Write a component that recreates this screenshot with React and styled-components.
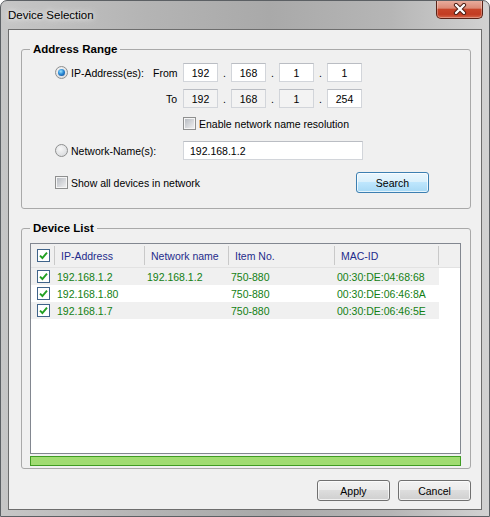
import styled, { createGlobalStyle } from "styled-components";

const UI = `"Liberation Sans", Arial, sans-serif`;

const GlobalStyle = createGlobalStyle`
  html, body { margin: 0; padding: 0; background: #ffffff; }
  body { font-family: ${UI}; font-size: 10.5px; color: #000; }
  * { box-sizing: border-box; }
`;

const Window = styled.div`
  width: 490px;
  height: 517px;
  display: flex;
  flex-direction: column;
  border: 1px solid #5c6064;
  border-radius: 7px 7px 0 0;
  overflow: hidden;
  background: linear-gradient(90deg, #c6c6c6 0%, #b4b4b4 30%, #a9a9a9 55%, #b6b6b6 80%, #d2d2d2 100%);
`;

const TitleBar = styled.div`
  height: 28px;
  flex: none;
  display: flex;
  justify-content: space-between;
  align-items: flex-start;
  padding: 0 6px 0 7px;
`;

const Title = styled.span`
  margin-top: 7px;
  font-family: ${UI};
  font-size: 11.5px;
  line-height: 14px;
  color: #000;
  text-shadow: 0 0 8px #fff, 0 0 4px rgba(255, 255, 255, 0.7);
`;

const CloseButton = styled.div`
  width: 47px;
  height: 19px;
  margin-top: -1px;
  display: flex;
  align-items: center;
  justify-content: center;
  border: 1px solid #5a2216;
  border-top: none;
  border-radius: 0 0 5px 5px;
  background: linear-gradient(#eab0a1 0%, #dc8a76 45%, #c74429 52%, #c23c22 80%, #d5674a 100%);
  box-shadow: inset 0 0 0 1px rgba(255, 255, 255, 0.3);
`;

const Client = styled.div`
  flex: 1;
  margin: 0 7px 6px 7px;
  border: 1px solid #6d6d6d;
  background: #f0f0f0;
  display: flex;
  flex-direction: column;
  padding: 0 10px 0 12px;
`;

const Group = styled.fieldset`
  margin: 13px 0 0 0;
  padding: 0;
  min-inline-size: 0;
  border: 1px solid #a9a9a9;
  border-radius: 3px;
`;

const Legend = styled.legend`
  margin-left: 8px;
  padding: 0 3px;
  font-family: ${UI};
  font-size: 11.5px;
  font-weight: bold;
  line-height: 13px;
  color: #000;
`;

const AddressBody = styled.div`
  padding: 7px 41px 15px 33px;
  display: flex;
  flex-direction: column;
`;

const FormRow = styled.div`
  display: grid;
  grid-template-columns: 98px 30px 1fr;
  align-items: center;
  height: ${(p) => p.$h}px;
  margin-top: ${(p) => p.$top || 0}px;
`;

const BottomRow = styled.div`
  display: flex;
  justify-content: space-between;
  align-items: center;
  height: 21px;
  margin-top: 12px;
`;

const Choice = styled.label`
  display: flex;
  align-items: center;
  gap: 3px;
  grid-column: ${(p) => p.$col || "auto"};
  white-space: nowrap;
`;

const RangeLabel = styled.span`
  text-align: right;
  padding-right: 6px;
`;

const Radio = styled.span`
  width: 13px;
  height: 13px;
  border-radius: 50%;
  border: 1px solid #8e8f8f;
  background: radial-gradient(circle at 40% 35%, #f7f7f7 0%, #d3d5d8 100%);
  display: inline-flex;
  align-items: center;
  justify-content: center;
  flex: none;

  &::after {
    content: "";
    display: ${(p) => (p.$on ? "block" : "none")};
    width: 7px;
    height: 7px;
    border-radius: 50%;
    background: radial-gradient(circle at 40% 35%, #9ae4ff 0%, #2b8ad6 45%, #0b3e84 100%);
  }
`;

const Box = styled.span`
  width: 13px;
  height: 13px;
  flex: none;
  display: inline-flex;
  align-items: center;
  justify-content: center;
  border: 1px solid ${(p) => (p.$checked ? "#40648a" : "#8e8f8f")};
  padding: 1px;
  background: ${(p) =>
    p.$checked ? "#ffffff" : "linear-gradient(135deg, #b8bcc2, #eeeeef) content-box, #f5f5f5"};
`;

const Check = ({ checked }) => (
  <Box $checked={checked}>
    {checked && (
      <svg width="9" height="9" viewBox="0 0 9 9">
        <path d="M1 4.6 L3.4 7 L8 1.6" fill="none" stroke="#22a022" strokeWidth="1.9" />
      </svg>
    )}
  </Box>
);

const IpFields = styled.div`
  display: flex;
  align-items: center;
`;

const IpBox = styled.input`
  width: 35px;
  height: 19px;
  margin: 0;
  padding: 0;
  border: 1px solid #d2d5da;
  border-top-color: #babdc3;
  background: ${(p) => (p.$dim ? "#f3f3f3" : "#ffffff")};
  font-family: ${UI};
  font-size: 10.5px;
  color: #000;
  text-align: center;
  outline: none;
`;

const Dot = styled.span`
  width: 13px;
  text-align: center;
`;

const NameBox = styled(IpBox)`
  width: 180px;
  text-align: left;
  padding-left: 6px;
  grid-column: 3;
`;

const Button = styled.button`
  width: 73px;
  height: 21px;
  margin: 0;
  padding: 0;
  border-radius: 3px;
  font-family: ${UI};
  font-size: 10.5px;
  color: #000;
  border: 1px solid ${(p) => (p.$focus ? "#3c7fb1" : "#707070")};
  background: ${(p) =>
    p.$focus
      ? "linear-gradient(#eaf6fd 0%, #d9f0fc 49%, #bee6fd 50%, #a7d9f5 100%)"
      : "linear-gradient(#f2f2f2 0%, #ebebeb 49%, #dddddd 50%, #cfcfcf 100%)"};
  box-shadow: inset 0 0 0 1px rgba(255, 255, 255, 0.7);
`;

const ListBody = styled.div`
  padding: 8px 9px 2px 8px;
  display: flex;
  flex-direction: column;
`;

const ListView = styled.div`
  height: 211px;
  border: 1px solid #828790;
  background: #ffffff;
`;

const cols = "24px 90px 84px 106px 104px";

const Header = styled.div`
  display: grid;
  grid-template-columns: ${cols} 1fr;
  height: 24px;
  padding: 2px 0;
  background: #f0f0f0;
  border-bottom: 1px solid #e2e2e2;
`;

const HeadCell = styled.div`
  display: flex;
  align-items: center;
  padding-left: 6px;
  color: #1f2c8c;
  border-right: ${(p) => (p.$last ? "none" : "1px solid #c9c9c9")};
`;

const Row = styled.div`
  display: grid;
  grid-template-columns: ${cols};
  width: max-content;
  height: 17px;
  align-items: center;
  background: ${(p) => (p.$odd ? "#f0f0f0" : "#ffffff")};
  color: #138013;
`;

const Cell = styled.div`
  padding-left: ${(p) => (p.$check ? 6 : 2)}px;
  display: flex;
  align-items: center;
  white-space: nowrap;
`;

const Progress = styled.div`
  height: 10px;
  margin-top: 2px;
  border: 1px solid #3f9c22;
  background: #a0dc72;
`;

const Actions = styled.div`
  display: flex;
  justify-content: flex-end;
  gap: 8px;
  margin-top: 11px;
`;

const devices = [
  { ip: "192.168.1.2", name: "192.168.1.2", item: "750-880", mac: "00:30:DE:04:68:68" },
  { ip: "192.168.1.80", name: "", item: "750-880", mac: "00:30:DE:06:46:8A" },
  { ip: "192.168.1.7", name: "", item: "750-880", mac: "00:30:DE:06:46:5E" },
];

export default function App() {
  return (
    <>
      <GlobalStyle />
      <Window>
        <TitleBar>
          <Title>Device Selection</Title>
          <CloseButton>
            <svg width="14" height="12" viewBox="0 0 14 12">
              <path d="M3 2 L11 10 M11 2 L3 10" stroke="#4a1a10" strokeWidth="4.2" strokeLinecap="round" />
              <path d="M3 2 L11 10 M11 2 L3 10" stroke="#ffffff" strokeWidth="2.4" strokeLinecap="round" />
            </svg>
          </CloseButton>
        </TitleBar>
        <Client>
          <Group>
            <Legend>Address Range</Legend>
            <AddressBody>
              <FormRow $h={19}>
                <Choice>
                  <Radio $on />
                  IP-Address(es):
                </Choice>
                <RangeLabel>From</RangeLabel>
                <IpFields>
                  <IpBox readOnly value="192" />
                  <Dot>.</Dot>
                  <IpBox readOnly value="168" />
                  <Dot>.</Dot>
                  <IpBox readOnly value="1" />
                  <Dot>.</Dot>
                  <IpBox readOnly value="1" />
                </IpFields>
              </FormRow>
              <FormRow $h={19} $top={7}>
                <span />
                <RangeLabel>To</RangeLabel>
                <IpFields>
                  <IpBox readOnly $dim value="192" />
                  <Dot>.</Dot>
                  <IpBox readOnly $dim value="168" />
                  <Dot>.</Dot>
                  <IpBox readOnly $dim value="1" />
                  <Dot>.</Dot>
                  <IpBox readOnly value="254" />
                </IpFields>
              </FormRow>
              <FormRow $h={13} $top={9}>
                <Choice $col={3}>
                  <Check />
                  Enable network name resolution
                </Choice>
              </FormRow>
              <FormRow $h={19} $top={11}>
                <Choice>
                  <Radio />
                  Network-Name(s):
                </Choice>
                <NameBox readOnly value="192.168.1.2" />
              </FormRow>
              <BottomRow>
                <Choice>
                  <Check />
                  Show all devices in network
                </Choice>
                <Button $focus>Search</Button>
              </BottomRow>
            </AddressBody>
          </Group>
          <Group>
            <Legend>Device List</Legend>
            <ListBody>
              <ListView>
                <Header>
                  <HeadCell>
                    <Check checked />
                  </HeadCell>
                  <HeadCell>IP-Address</HeadCell>
                  <HeadCell>Network name</HeadCell>
                  <HeadCell>Item No.</HeadCell>
                  <HeadCell>MAC-ID</HeadCell>
                  <HeadCell $last />
                </Header>
                {devices.map((d, i) => (
                  <Row key={d.mac} $odd={i % 2 === 0}>
                    <Cell $check>
                      <Check checked />
                    </Cell>
                    <Cell>{d.ip}</Cell>
                    <Cell>{d.name}</Cell>
                    <Cell>{d.item}</Cell>
                    <Cell>{d.mac}</Cell>
                  </Row>
                ))}
              </ListView>
              <Progress />
            </ListBody>
          </Group>
          <Actions>
            <Button>Apply</Button>
            <Button>Cancel</Button>
          </Actions>
        </Client>
      </Window>
    </>
  );
}
